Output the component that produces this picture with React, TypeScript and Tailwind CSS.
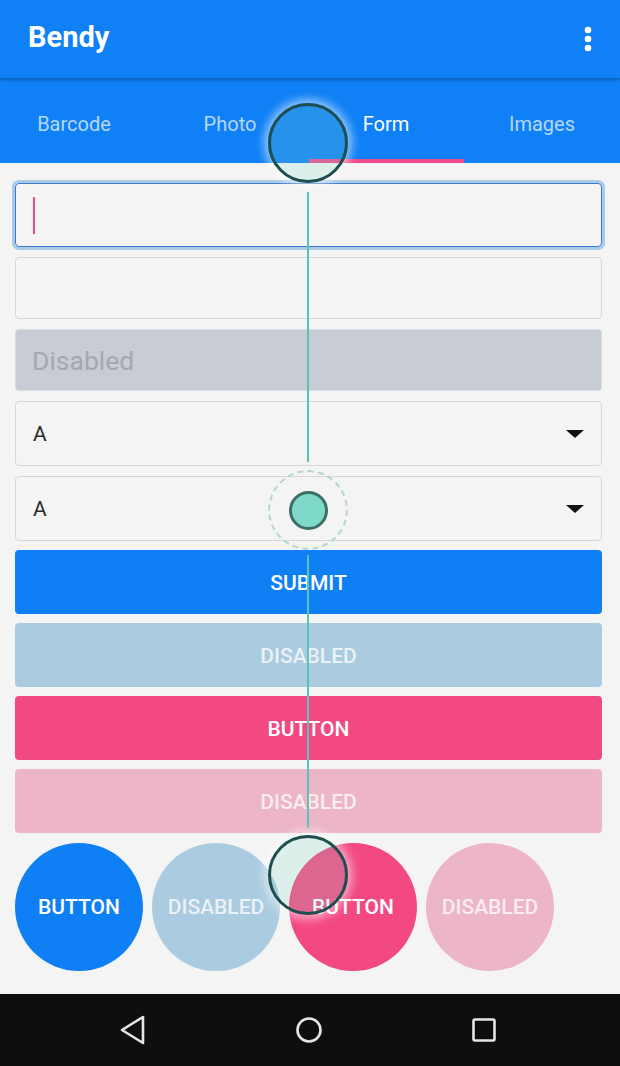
import React from "react";

const tabs = ["Barcode", "Photo", "Form", "Images"];

function Select({ value }: { value: string }) {
  return (
    <div className="h-[65px] rounded-[4px] border border-[#d6d6d6] flex items-center justify-between pl-[17px] pr-[16px]">
      <span className="text-[21px] text-[#2a2a2a] pt-[3px]">{value}</span>
      <svg width="20" height="10" viewBox="0 0 20 10">
        <polygon points="1,1 19,1 10,9" fill="#111" />
      </svg>
    </div>
  );
}

function Touch({ top }: { top: number }) {
  return (
    <div className="absolute left-[268px] w-[80px] h-[80px] rounded-full border-[3px] border-[#1d4f50] bg-[rgba(130,220,200,0.2)] shadow-[0_0_10px_4px_rgba(255,255,255,0.55)]"
      style={{ top }} />
  );
}

const btn = "h-[64px] rounded-[4px] flex items-center justify-center pt-[3px] text-[21px] font-medium";
const round = "w-[128px] h-[128px] rounded-full flex items-center justify-center pt-[2px] text-[21px] font-medium";

export default function App() {
  return (
    <div className="relative h-[1066px] w-[620px] flex flex-col bg-[#f4f4f4] font-['Roboto',sans-serif] overflow-hidden">
      <div className="h-[78px] bg-[#0f80f5] flex items-center justify-between pl-[28px] pr-[28px] relative z-10 shadow-[0_2px_3px_rgba(0,0,0,0.25)]">
        <span className="text-[29px] font-bold text-white pb-[2px]">Bendy</span>
        <svg width="8" height="26" viewBox="0 0 8 26">
          <circle cx="4" cy="4" r="3.3" fill="#fff" />
          <circle cx="4" cy="13" r="3.3" fill="#fff" />
          <circle cx="4" cy="22" r="3.3" fill="#fff" />
        </svg>
      </div>
      <div className="h-[85px] bg-[#0f80f5] grid grid-cols-[repeat(4,156px)] ml-[-4px]">
        {tabs.map(t => (
          <div key={t} className="relative flex items-center justify-center pt-[6px]">
            <span className={"text-[20px] " + (t === "Form" ? "text-white" : "text-white/70")}>{t}</span>
            {t === "Form" && <div className="absolute left-[1px] right-0 bottom-0 h-[4px] bg-[#ef4a8a]" />}
          </div>
        ))}
      </div>
      <div className="flex-1 flex flex-col pl-[15px] pt-[20px] pr-[18px]">
        <div className="flex flex-col gap-[10px]">
          <div className="h-[64px] rounded-[4px] border border-[#3b78cf] ring-[3px] ring-[#a9cbe7] flex items-center pl-[17px]">
            <div className="w-[2px] h-[37px] bg-[#ee4a82]" />
          </div>
          <div className="h-[62px] rounded-[4px] border border-[#d6d6d6]" />
          <div className="h-[62px] rounded-[4px] border border-[#d9dbe0] bg-[#c8ccd4] flex items-center pl-[16px]">
            <span className="text-[26.5px] text-[#a4a8ae] pt-[2px]">Disabled</span>
          </div>
          <Select value="A" />
          <Select value="A" />
        </div>
        <div className="flex flex-col gap-[9px] mt-[9px]">
          <div className={btn + " bg-[#0f7ff5] text-white"}>SUBMIT</div>
          <div className={btn + " bg-[#abcce0] text-white/75"}>DISABLED</div>
          <div className={btn + " bg-[#f34983] text-white"}>BUTTON</div>
          <div className={btn + " bg-[#ecb5c8] text-white/75"}>DISABLED</div>
        </div>
        <div className="flex gap-[9px] mt-[10px]">
          <div className={round + " bg-[#0f7ff5] text-white"}>BUTTON</div>
          <div className={round + " bg-[#abcce0] text-white/75"}>DISABLED</div>
          <div className={round + " bg-[#f34983] text-white"}>BUTTON</div>
          <div className={round + " bg-[#ecb5c8] text-white/75"}>DISABLED</div>
        </div>
      </div>
      <div className="h-[72px] bg-[#0e0e0e] flex items-center pl-[118px] gap-[146px]">
        <svg width="30" height="32" viewBox="0 0 30 32">
          <polygon points="25,3 25,29 4,16" fill="none" stroke="#e6e6e6" strokeWidth="2.6" strokeLinejoin="round" />
        </svg>
        <svg width="30" height="30" viewBox="0 0 30 30">
          <circle cx="15" cy="15" r="11.5" fill="none" stroke="#e6e6e6" strokeWidth="2.6" />
        </svg>
        <svg width="28" height="28" viewBox="0 0 28 28">
          <rect x="3.5" y="3.5" width="21" height="21" rx="1.5" fill="none" stroke="#e6e6e6" strokeWidth="2.6" />
        </svg>
      </div>

      {/* touch overlay */}
      <div className="absolute left-[307px] top-[192px] w-[2px] h-[270px] bg-[#5cc2b6]" />
      <div className="absolute left-[307px] top-[555px] w-[2px] h-[273px] bg-[#5cc2b6]" />
      <div className="absolute left-[268px] top-[470px] w-[80px] h-[80px] rounded-full border-2 border-dashed border-[#b4d6d2] flex items-center justify-center">
        <div className="w-[39px] h-[39px] rounded-full bg-[#7ed9c9] border-[3px] border-[#3d6f68]" />
      </div>
      <Touch top={103} />
      <Touch top={835} />
    </div>
  );
}
